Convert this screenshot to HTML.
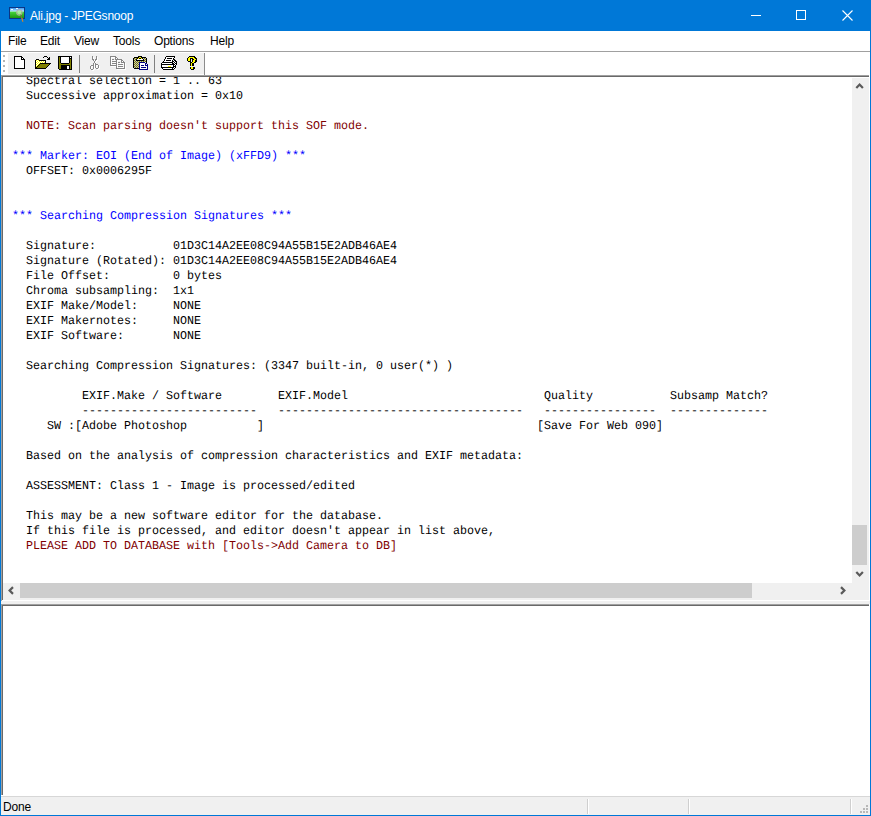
<!DOCTYPE html>
<html>
<head>
<meta charset="utf-8">
<title>Ali.jpg - JPEGsnoop</title>
<style>
html,body{margin:0;padding:0;}
body{width:871px;height:816px;overflow:hidden;background:#fff;font-family:"Liberation Sans",sans-serif;position:relative;}
#win{position:absolute;left:0;top:0;width:871px;height:816px;background:#fff;overflow:hidden;}
.abs{position:absolute;}
#title{left:0;top:0;width:871px;height:31px;background:#0078d7;}
#title .txt{left:30px;top:8px;font-size:12px;letter-spacing:-0.22px;color:#fff;white-space:nowrap;line-height:16px;}
#bl{left:0;top:31px;width:1px;height:785px;background:#0078d7;}
#br{left:870px;top:31px;width:1px;height:785px;background:#0078d7;}
#bb{left:0;top:815px;width:871px;height:1px;background:#0078d7;}
#menu{left:1px;top:31px;width:869px;height:20px;background:#fff;}
#menu span{position:absolute;top:2px;font-size:12px;letter-spacing:-0.2px;line-height:16px;color:#000;white-space:nowrap;}
#menuline{left:1px;top:51px;width:869px;height:1px;background:#a0a0a0;}
#tbarbg{left:8px;top:53px;width:196px;height:21px;background:#f0f0f0;}
#tbarend{left:204px;top:53px;width:1px;height:22px;background:#8c8c8c;}
/* upper pane sunken border */
#p1o{left:1px;top:75px;width:868px;height:526px;background:#a0a0a0;}
#p1i{left:2px;top:76px;width:867px;height:525px;background:#696969;}
#p1h{left:2px;top:600px;width:867px;height:1px;background:#fff;}
#edit{left:3px;top:77px;width:866px;height:523px;background:#fff;overflow:hidden;}
#pre{left:9px;top:-3px;margin:0;font-family:"Liberation Mono",monospace;font-size:12px;line-height:15px;color:#000;white-space:pre;text-rendering:geometricPrecision;transform:scaleX(0.972222);transform-origin:0 0;}
.r{color:#800000;}
.b{color:#0000ff;}
.d{text-shadow:0.9px 0 0 #000,-0.9px 0 0 #000;}
#vs{left:852px;top:78px;width:17px;height:505px;background:#f0f0f0;}
#vthumb{left:852px;top:525px;width:15px;height:40px;background:#cdcdcd;}
#hs{left:3px;top:583px;width:866px;height:17px;background:#f0f0f0;}
#hthumb{left:20px;top:583px;width:732px;height:15px;background:#cdcdcd;}
#splitbar{left:1px;top:601px;width:869px;height:3px;background:#f0f0f0;}
/* lower pane */
#p2o{left:1px;top:604px;width:868px;height:191px;background:#a0a0a0;}
#p2i{left:2px;top:605px;width:867px;height:190px;background:#696969;}
#p2{left:3px;top:606px;width:866px;height:190px;background:#fff;}
#statusline{left:1px;top:796px;width:869px;height:1px;background:#d7d7d7;}
#status{left:1px;top:797px;width:869px;height:18px;background:#f0f0f0;}
#status .txt{left:2px;top:2px;font-size:12px;letter-spacing:-0.2px;line-height:16px;color:#000;}
.ssep{position:absolute;top:799px;width:1px;height:15px;background:#cfcfcf;}
.ssepw{position:absolute;top:799px;width:1px;height:15px;background:#fff;}
</style>
</head>
<body>
<div id="win">
  <div id="title" class="abs">
    <!--APPICON--><svg class="abs" style="left:8px;top:5px" width="20" height="20" viewBox="8 5 20 20">
<defs><linearGradient id="sky" x1="0" y1="0" x2="0" y2="1"><stop offset="0" stop-color="#3f97ee"/><stop offset="0.55" stop-color="#8fcdfa"/><stop offset="1" stop-color="#d6f2ff"/></linearGradient>
<linearGradient id="grass" x1="0" y1="0" x2="0" y2="1"><stop offset="0" stop-color="#46d83e"/><stop offset="1" stop-color="#1c9610"/></linearGradient></defs>
<rect x="9" y="7" width="16" height="12" fill="#0a3585"/>
<rect x="10" y="8" width="14" height="4" fill="url(#sky)"/>
<rect x="10" y="11.6" width="14" height="6.4" fill="url(#grass)"/>
<rect x="11" y="9" width="2" height="1" fill="#f4faff"/><rect x="16" y="8" width="2" height="1" fill="#eef7ff"/>
<circle cx="19.3" cy="12.5" r="2.2" fill="#aeeea2" fill-opacity="0.9"/>
<circle cx="19.3" cy="12.5" r="2.8" fill="none" stroke="#b8ada6" stroke-width="1"/>
<path d="M20.9 15 L22.7 21.3" stroke="#7d6a4c" stroke-width="1" stroke-linecap="round"/>
<path d="M22 18.6 L22.8 21.3" stroke="#d08a30" stroke-width="1.1" stroke-linecap="round"/>
</svg><!--/APPICON-->
    <div class="txt abs">Ali.jpg - JPEGsnoop</div>
    <!--WINBTN--><svg class="abs" style="left:731px;top:0" width="140" height="31" viewBox="731 0 140 31" shape-rendering="crispEdges">
<rect x="751" y="15" width="10" height="1" fill="#fff"/>
<rect x="796.5" y="10.5" width="9" height="9" fill="none" stroke="#fff" stroke-width="1"/>
<g shape-rendering="geometricPrecision"><path d="M842.5 10.5 L852.5 20.5 M852.5 10.5 L842.5 20.5" stroke="#fff" stroke-width="1.1" fill="none"/></g>
</svg><!--/WINBTN-->
  </div>
  <div id="menu" class="abs">
    <span style="left:7px">File</span>
    <span style="left:39px">Edit</span>
    <span style="left:73px">View</span>
    <span style="left:112px">Tools</span>
    <span style="left:153px">Options</span>
    <span style="left:209px">Help</span>
  </div>
  <div id="menuline" class="abs"></div>
  <div id="tbarbg" class="abs"></div>
  <div id="tbarend" class="abs"></div>
  <!--ICONS--><svg id="tbicons" class="abs" style="left:0;top:0" width="871" height="80" viewBox="0 0 871 80" shape-rendering="crispEdges"><rect x="14" y="56" width="8" height="1" fill="#000000"/><rect x="14" y="57" width="1" height="1" fill="#000000"/><rect x="15" y="57" width="6" height="1" fill="#ffffff"/><rect x="21" y="57" width="2" height="1" fill="#000000"/><rect x="14" y="58" width="1" height="1" fill="#000000"/><rect x="15" y="58" width="6" height="1" fill="#ffffff"/><rect x="21" y="58" width="1" height="1" fill="#000000"/><rect x="22" y="58" width="1" height="1" fill="#ffffff"/><rect x="23" y="58" width="1" height="1" fill="#000000"/><rect x="14" y="59" width="1" height="1" fill="#000000"/><rect x="15" y="59" width="6" height="1" fill="#ffffff"/><rect x="21" y="59" width="4" height="1" fill="#000000"/><rect x="14" y="60" width="1" height="1" fill="#000000"/><rect x="15" y="60" width="9" height="1" fill="#ffffff"/><rect x="24" y="60" width="1" height="1" fill="#000000"/><rect x="14" y="61" width="1" height="1" fill="#000000"/><rect x="15" y="61" width="9" height="1" fill="#ffffff"/><rect x="24" y="61" width="1" height="1" fill="#000000"/><rect x="14" y="62" width="1" height="1" fill="#000000"/><rect x="15" y="62" width="9" height="1" fill="#ffffff"/><rect x="24" y="62" width="1" height="1" fill="#000000"/><rect x="14" y="63" width="1" height="1" fill="#000000"/><rect x="15" y="63" width="9" height="1" fill="#ffffff"/><rect x="24" y="63" width="1" height="1" fill="#000000"/><rect x="14" y="64" width="1" height="1" fill="#000000"/><rect x="15" y="64" width="9" height="1" fill="#ffffff"/><rect x="24" y="64" width="1" height="1" fill="#000000"/><rect x="14" y="65" width="1" height="1" fill="#000000"/><rect x="15" y="65" width="9" height="1" fill="#ffffff"/><rect x="24" y="65" width="1" height="1" fill="#000000"/><rect x="14" y="66" width="1" height="1" fill="#000000"/><rect x="15" y="66" width="9" height="1" fill="#ffffff"/><rect x="24" y="66" width="1" height="1" fill="#000000"/><rect x="14" y="67" width="1" height="1" fill="#000000"/><rect x="15" y="67" width="9" height="1" fill="#ffffff"/><rect x="24" y="67" width="1" height="1" fill="#000000"/><rect x="14" y="68" width="11" height="1" fill="#000000"/><rect x="44" y="56" width="3" height="1" fill="#000000"/><rect x="43" y="57" width="1" height="1" fill="#000000"/><rect x="47" y="57" width="1" height="1" fill="#000000"/><rect x="49" y="57" width="1" height="1" fill="#000000"/><rect x="48" y="58" width="2" height="1" fill="#000000"/><rect x="36" y="59" width="3" height="1" fill="#000000"/><rect x="47" y="59" width="3" height="1" fill="#000000"/><rect x="35" y="60" width="1" height="1" fill="#000000"/><rect x="36" y="60" width="1" height="1" fill="#ffff00"/><rect x="37" y="60" width="1" height="1" fill="#ffffff"/><rect x="38" y="60" width="1" height="1" fill="#ffff00"/><rect x="39" y="60" width="7" height="1" fill="#000000"/><rect x="35" y="61" width="1" height="1" fill="#000000"/><rect x="36" y="61" width="1" height="1" fill="#ffffff"/><rect x="37" y="61" width="1" height="1" fill="#ffff00"/><rect x="38" y="61" width="1" height="1" fill="#ffffff"/><rect x="39" y="61" width="1" height="1" fill="#ffff00"/><rect x="40" y="61" width="1" height="1" fill="#ffffff"/><rect x="41" y="61" width="1" height="1" fill="#ffff00"/><rect x="42" y="61" width="1" height="1" fill="#ffffff"/><rect x="43" y="61" width="1" height="1" fill="#ffff00"/><rect x="44" y="61" width="1" height="1" fill="#ffffff"/><rect x="45" y="61" width="1" height="1" fill="#000000"/><rect x="35" y="62" width="1" height="1" fill="#000000"/><rect x="36" y="62" width="1" height="1" fill="#ffff00"/><rect x="37" y="62" width="1" height="1" fill="#ffffff"/><rect x="38" y="62" width="1" height="1" fill="#ffff00"/><rect x="39" y="62" width="1" height="1" fill="#ffffff"/><rect x="40" y="62" width="1" height="1" fill="#ffff00"/><rect x="41" y="62" width="1" height="1" fill="#ffffff"/><rect x="42" y="62" width="1" height="1" fill="#ffff00"/><rect x="43" y="62" width="1" height="1" fill="#ffffff"/><rect x="44" y="62" width="1" height="1" fill="#ffff00"/><rect x="45" y="62" width="1" height="1" fill="#000000"/><rect x="35" y="63" width="1" height="1" fill="#000000"/><rect x="36" y="63" width="1" height="1" fill="#ffffff"/><rect x="37" y="63" width="1" height="1" fill="#ffff00"/><rect x="38" y="63" width="1" height="1" fill="#ffffff"/><rect x="39" y="63" width="1" height="1" fill="#ffff00"/><rect x="40" y="63" width="11" height="1" fill="#000000"/><rect x="35" y="64" width="1" height="1" fill="#000000"/><rect x="36" y="64" width="1" height="1" fill="#ffff00"/><rect x="37" y="64" width="1" height="1" fill="#ffffff"/><rect x="38" y="64" width="1" height="1" fill="#ffff00"/><rect x="39" y="64" width="1" height="1" fill="#000000"/><rect x="40" y="64" width="9" height="1" fill="#808000"/><rect x="49" y="64" width="1" height="1" fill="#000000"/><rect x="35" y="65" width="1" height="1" fill="#000000"/><rect x="36" y="65" width="1" height="1" fill="#ffffff"/><rect x="37" y="65" width="1" height="1" fill="#ffff00"/><rect x="38" y="65" width="1" height="1" fill="#000000"/><rect x="39" y="65" width="9" height="1" fill="#808000"/><rect x="48" y="65" width="1" height="1" fill="#000000"/><rect x="35" y="66" width="1" height="1" fill="#000000"/><rect x="36" y="66" width="1" height="1" fill="#ffff00"/><rect x="37" y="66" width="1" height="1" fill="#000000"/><rect x="38" y="66" width="9" height="1" fill="#808000"/><rect x="47" y="66" width="1" height="1" fill="#000000"/><rect x="35" y="67" width="2" height="1" fill="#000000"/><rect x="37" y="67" width="9" height="1" fill="#808000"/><rect x="46" y="67" width="1" height="1" fill="#000000"/><rect x="35" y="68" width="11" height="1" fill="#000000"/><rect x="58" y="56" width="14" height="1" fill="#000000"/><rect x="58" y="57" width="1" height="1" fill="#000000"/><rect x="59" y="57" width="1" height="1" fill="#808000"/><rect x="60" y="57" width="1" height="1" fill="#000000"/><rect x="61" y="57" width="8" height="1" fill="#ffffff"/><rect x="69" y="57" width="1" height="1" fill="#000000"/><rect x="70" y="57" width="1" height="1" fill="#ffffff"/><rect x="71" y="57" width="1" height="1" fill="#000000"/><rect x="58" y="58" width="1" height="1" fill="#000000"/><rect x="59" y="58" width="1" height="1" fill="#808000"/><rect x="60" y="58" width="1" height="1" fill="#000000"/><rect x="61" y="58" width="8" height="1" fill="#ffffff"/><rect x="69" y="58" width="3" height="1" fill="#000000"/><rect x="58" y="59" width="1" height="1" fill="#000000"/><rect x="59" y="59" width="1" height="1" fill="#808000"/><rect x="60" y="59" width="1" height="1" fill="#000000"/><rect x="61" y="59" width="8" height="1" fill="#ffffff"/><rect x="69" y="59" width="1" height="1" fill="#000000"/><rect x="70" y="59" width="1" height="1" fill="#808000"/><rect x="71" y="59" width="1" height="1" fill="#000000"/><rect x="58" y="60" width="1" height="1" fill="#000000"/><rect x="59" y="60" width="1" height="1" fill="#808000"/><rect x="60" y="60" width="1" height="1" fill="#000000"/><rect x="61" y="60" width="8" height="1" fill="#ffffff"/><rect x="69" y="60" width="1" height="1" fill="#000000"/><rect x="70" y="60" width="1" height="1" fill="#808000"/><rect x="71" y="60" width="1" height="1" fill="#000000"/><rect x="58" y="61" width="1" height="1" fill="#000000"/><rect x="59" y="61" width="1" height="1" fill="#808000"/><rect x="60" y="61" width="1" height="1" fill="#000000"/><rect x="61" y="61" width="8" height="1" fill="#ffffff"/><rect x="69" y="61" width="1" height="1" fill="#000000"/><rect x="70" y="61" width="1" height="1" fill="#808000"/><rect x="71" y="61" width="1" height="1" fill="#000000"/><rect x="58" y="62" width="1" height="1" fill="#000000"/><rect x="59" y="62" width="1" height="1" fill="#808000"/><rect x="60" y="62" width="1" height="1" fill="#000000"/><rect x="61" y="62" width="8" height="1" fill="#ffffff"/><rect x="69" y="62" width="1" height="1" fill="#000000"/><rect x="70" y="62" width="1" height="1" fill="#808000"/><rect x="71" y="62" width="1" height="1" fill="#000000"/><rect x="58" y="63" width="1" height="1" fill="#000000"/><rect x="59" y="63" width="2" height="1" fill="#808000"/><rect x="61" y="63" width="8" height="1" fill="#000000"/><rect x="69" y="63" width="2" height="1" fill="#808000"/><rect x="71" y="63" width="1" height="1" fill="#000000"/><rect x="58" y="64" width="1" height="1" fill="#000000"/><rect x="59" y="64" width="12" height="1" fill="#808000"/><rect x="71" y="64" width="1" height="1" fill="#000000"/><rect x="58" y="65" width="1" height="1" fill="#000000"/><rect x="59" y="65" width="2" height="1" fill="#808000"/><rect x="61" y="65" width="9" height="1" fill="#000000"/><rect x="70" y="65" width="1" height="1" fill="#808000"/><rect x="71" y="65" width="1" height="1" fill="#000000"/><rect x="58" y="66" width="1" height="1" fill="#000000"/><rect x="59" y="66" width="2" height="1" fill="#808000"/><rect x="61" y="66" width="6" height="1" fill="#000000"/><rect x="67" y="66" width="2" height="1" fill="#ffffff"/><rect x="69" y="66" width="1" height="1" fill="#000000"/><rect x="70" y="66" width="1" height="1" fill="#808000"/><rect x="71" y="66" width="1" height="1" fill="#000000"/><rect x="58" y="67" width="1" height="1" fill="#000000"/><rect x="59" y="67" width="2" height="1" fill="#808000"/><rect x="61" y="67" width="6" height="1" fill="#000000"/><rect x="67" y="67" width="2" height="1" fill="#ffffff"/><rect x="69" y="67" width="1" height="1" fill="#000000"/><rect x="70" y="67" width="1" height="1" fill="#808000"/><rect x="71" y="67" width="1" height="1" fill="#000000"/><rect x="58" y="68" width="1" height="1" fill="#000000"/><rect x="59" y="68" width="2" height="1" fill="#808000"/><rect x="61" y="68" width="6" height="1" fill="#000000"/><rect x="67" y="68" width="2" height="1" fill="#ffffff"/><rect x="69" y="68" width="1" height="1" fill="#000000"/><rect x="70" y="68" width="1" height="1" fill="#808000"/><rect x="71" y="68" width="1" height="1" fill="#000000"/><rect x="59" y="69" width="13" height="1" fill="#000000"/><rect x="93" y="57" width="1" height="1" fill="#ffffff"/><rect x="97" y="57" width="1" height="1" fill="#ffffff"/><rect x="93" y="58" width="1" height="1" fill="#ffffff"/><rect x="97" y="58" width="1" height="1" fill="#ffffff"/><rect x="93" y="59" width="1" height="1" fill="#ffffff"/><rect x="97" y="59" width="1" height="1" fill="#ffffff"/><rect x="93" y="60" width="2" height="1" fill="#ffffff"/><rect x="96" y="60" width="2" height="1" fill="#ffffff"/><rect x="94" y="61" width="1" height="1" fill="#ffffff"/><rect x="96" y="61" width="1" height="1" fill="#ffffff"/><rect x="95" y="62" width="1" height="1" fill="#ffffff"/><rect x="95" y="63" width="1" height="1" fill="#ffffff"/><rect x="94" y="64" width="1" height="1" fill="#ffffff"/><rect x="96" y="64" width="1" height="1" fill="#ffffff"/><rect x="94" y="65" width="1" height="1" fill="#ffffff"/><rect x="96" y="65" width="3" height="1" fill="#ffffff"/><rect x="92" y="66" width="3" height="1" fill="#ffffff"/><rect x="96" y="66" width="1" height="1" fill="#ffffff"/><rect x="99" y="66" width="1" height="1" fill="#ffffff"/><rect x="91" y="67" width="1" height="1" fill="#ffffff"/><rect x="94" y="67" width="1" height="1" fill="#ffffff"/><rect x="96" y="67" width="1" height="1" fill="#ffffff"/><rect x="99" y="67" width="1" height="1" fill="#ffffff"/><rect x="91" y="68" width="1" height="1" fill="#ffffff"/><rect x="94" y="68" width="1" height="1" fill="#ffffff"/><rect x="96" y="68" width="1" height="1" fill="#ffffff"/><rect x="99" y="68" width="1" height="1" fill="#ffffff"/><rect x="91" y="69" width="1" height="1" fill="#ffffff"/><rect x="94" y="69" width="1" height="1" fill="#ffffff"/><rect x="97" y="69" width="2" height="1" fill="#ffffff"/><rect x="92" y="70" width="2" height="1" fill="#ffffff"/><rect x="92" y="56" width="1" height="1" fill="#878787"/><rect x="96" y="56" width="1" height="1" fill="#878787"/><rect x="92" y="57" width="1" height="1" fill="#878787"/><rect x="96" y="57" width="1" height="1" fill="#878787"/><rect x="92" y="58" width="1" height="1" fill="#878787"/><rect x="96" y="58" width="1" height="1" fill="#878787"/><rect x="92" y="59" width="2" height="1" fill="#878787"/><rect x="95" y="59" width="2" height="1" fill="#878787"/><rect x="93" y="60" width="1" height="1" fill="#878787"/><rect x="95" y="60" width="1" height="1" fill="#878787"/><rect x="94" y="61" width="1" height="1" fill="#878787"/><rect x="94" y="62" width="1" height="1" fill="#878787"/><rect x="93" y="63" width="1" height="1" fill="#878787"/><rect x="95" y="63" width="1" height="1" fill="#878787"/><rect x="93" y="64" width="1" height="1" fill="#878787"/><rect x="95" y="64" width="3" height="1" fill="#878787"/><rect x="91" y="65" width="3" height="1" fill="#878787"/><rect x="95" y="65" width="1" height="1" fill="#878787"/><rect x="98" y="65" width="1" height="1" fill="#878787"/><rect x="90" y="66" width="1" height="1" fill="#878787"/><rect x="93" y="66" width="1" height="1" fill="#878787"/><rect x="95" y="66" width="1" height="1" fill="#878787"/><rect x="98" y="66" width="1" height="1" fill="#878787"/><rect x="90" y="67" width="1" height="1" fill="#878787"/><rect x="93" y="67" width="1" height="1" fill="#878787"/><rect x="95" y="67" width="1" height="1" fill="#878787"/><rect x="98" y="67" width="1" height="1" fill="#878787"/><rect x="90" y="68" width="1" height="1" fill="#878787"/><rect x="93" y="68" width="1" height="1" fill="#878787"/><rect x="96" y="68" width="2" height="1" fill="#878787"/><rect x="91" y="69" width="2" height="1" fill="#878787"/><rect x="111" y="57" width="6" height="1" fill="#ffffff"/><rect x="111" y="58" width="1" height="1" fill="#ffffff"/><rect x="116" y="58" width="2" height="1" fill="#ffffff"/><rect x="111" y="59" width="1" height="1" fill="#ffffff"/><rect x="116" y="59" width="1" height="1" fill="#ffffff"/><rect x="118" y="59" width="1" height="1" fill="#ffffff"/><rect x="111" y="60" width="1" height="1" fill="#ffffff"/><rect x="113" y="60" width="2" height="1" fill="#ffffff"/><rect x="116" y="60" width="7" height="1" fill="#ffffff"/><rect x="111" y="61" width="1" height="1" fill="#ffffff"/><rect x="117" y="61" width="1" height="1" fill="#ffffff"/><rect x="122" y="61" width="2" height="1" fill="#ffffff"/><rect x="111" y="62" width="1" height="1" fill="#ffffff"/><rect x="113" y="62" width="5" height="1" fill="#ffffff"/><rect x="122" y="62" width="1" height="1" fill="#ffffff"/><rect x="124" y="62" width="1" height="1" fill="#ffffff"/><rect x="111" y="63" width="1" height="1" fill="#ffffff"/><rect x="117" y="63" width="1" height="1" fill="#ffffff"/><rect x="119" y="63" width="2" height="1" fill="#ffffff"/><rect x="122" y="63" width="4" height="1" fill="#ffffff"/><rect x="111" y="64" width="1" height="1" fill="#ffffff"/><rect x="113" y="64" width="5" height="1" fill="#ffffff"/><rect x="125" y="64" width="1" height="1" fill="#ffffff"/><rect x="111" y="65" width="1" height="1" fill="#ffffff"/><rect x="117" y="65" width="1" height="1" fill="#ffffff"/><rect x="119" y="65" width="5" height="1" fill="#ffffff"/><rect x="125" y="65" width="1" height="1" fill="#ffffff"/><rect x="111" y="66" width="7" height="1" fill="#ffffff"/><rect x="125" y="66" width="1" height="1" fill="#ffffff"/><rect x="117" y="67" width="1" height="1" fill="#ffffff"/><rect x="119" y="67" width="5" height="1" fill="#ffffff"/><rect x="125" y="67" width="1" height="1" fill="#ffffff"/><rect x="117" y="68" width="1" height="1" fill="#ffffff"/><rect x="125" y="68" width="1" height="1" fill="#ffffff"/><rect x="117" y="69" width="9" height="1" fill="#ffffff"/><rect x="110" y="56" width="6" height="1" fill="#878787"/><rect x="110" y="57" width="1" height="1" fill="#878787"/><rect x="115" y="57" width="2" height="1" fill="#878787"/><rect x="110" y="58" width="1" height="1" fill="#878787"/><rect x="115" y="58" width="1" height="1" fill="#878787"/><rect x="117" y="58" width="1" height="1" fill="#878787"/><rect x="110" y="59" width="1" height="1" fill="#878787"/><rect x="112" y="59" width="2" height="1" fill="#878787"/><rect x="115" y="59" width="7" height="1" fill="#878787"/><rect x="110" y="60" width="1" height="1" fill="#878787"/><rect x="116" y="60" width="1" height="1" fill="#878787"/><rect x="121" y="60" width="2" height="1" fill="#878787"/><rect x="110" y="61" width="1" height="1" fill="#878787"/><rect x="112" y="61" width="5" height="1" fill="#878787"/><rect x="121" y="61" width="1" height="1" fill="#878787"/><rect x="123" y="61" width="1" height="1" fill="#878787"/><rect x="110" y="62" width="1" height="1" fill="#878787"/><rect x="116" y="62" width="1" height="1" fill="#878787"/><rect x="118" y="62" width="2" height="1" fill="#878787"/><rect x="121" y="62" width="4" height="1" fill="#878787"/><rect x="110" y="63" width="1" height="1" fill="#878787"/><rect x="112" y="63" width="5" height="1" fill="#878787"/><rect x="124" y="63" width="1" height="1" fill="#878787"/><rect x="110" y="64" width="1" height="1" fill="#878787"/><rect x="116" y="64" width="1" height="1" fill="#878787"/><rect x="118" y="64" width="5" height="1" fill="#878787"/><rect x="124" y="64" width="1" height="1" fill="#878787"/><rect x="110" y="65" width="7" height="1" fill="#878787"/><rect x="124" y="65" width="1" height="1" fill="#878787"/><rect x="116" y="66" width="1" height="1" fill="#878787"/><rect x="118" y="66" width="5" height="1" fill="#878787"/><rect x="124" y="66" width="1" height="1" fill="#878787"/><rect x="116" y="67" width="1" height="1" fill="#878787"/><rect x="124" y="67" width="1" height="1" fill="#878787"/><rect x="116" y="68" width="9" height="1" fill="#878787"/><rect x="138" y="56" width="4" height="1" fill="#000000"/><rect x="134" y="57" width="5" height="1" fill="#000000"/><rect x="139" y="57" width="2" height="1" fill="#ffff00"/><rect x="141" y="57" width="5" height="1" fill="#000000"/><rect x="133" y="58" width="1" height="1" fill="#000000"/><rect x="134" y="58" width="1" height="1" fill="#808000"/><rect x="135" y="58" width="1" height="1" fill="#c0c0c0"/><rect x="136" y="58" width="1" height="1" fill="#808000"/><rect x="137" y="58" width="1" height="1" fill="#000000"/><rect x="138" y="58" width="1" height="1" fill="#ffff00"/><rect x="139" y="58" width="2" height="1" fill="#000000"/><rect x="141" y="58" width="1" height="1" fill="#ffff00"/><rect x="142" y="58" width="1" height="1" fill="#000000"/><rect x="143" y="58" width="1" height="1" fill="#c0c0c0"/><rect x="144" y="58" width="1" height="1" fill="#808000"/><rect x="145" y="58" width="1" height="1" fill="#c0c0c0"/><rect x="146" y="58" width="1" height="1" fill="#000000"/><rect x="133" y="59" width="1" height="1" fill="#000000"/><rect x="134" y="59" width="1" height="1" fill="#c0c0c0"/><rect x="135" y="59" width="1" height="1" fill="#808000"/><rect x="136" y="59" width="1" height="1" fill="#000000"/><rect x="137" y="59" width="6" height="1" fill="#ffffff"/><rect x="143" y="59" width="1" height="1" fill="#000000"/><rect x="144" y="59" width="1" height="1" fill="#c0c0c0"/><rect x="145" y="59" width="1" height="1" fill="#808000"/><rect x="146" y="59" width="1" height="1" fill="#000000"/><rect x="133" y="60" width="1" height="1" fill="#000000"/><rect x="134" y="60" width="1" height="1" fill="#808000"/><rect x="135" y="60" width="1" height="1" fill="#c0c0c0"/><rect x="136" y="60" width="8" height="1" fill="#000000"/><rect x="144" y="60" width="1" height="1" fill="#808000"/><rect x="145" y="60" width="1" height="1" fill="#c0c0c0"/><rect x="146" y="60" width="1" height="1" fill="#000000"/><rect x="133" y="61" width="1" height="1" fill="#000000"/><rect x="134" y="61" width="1" height="1" fill="#c0c0c0"/><rect x="135" y="61" width="1" height="1" fill="#808000"/><rect x="136" y="61" width="1" height="1" fill="#c0c0c0"/><rect x="137" y="61" width="1" height="1" fill="#808000"/><rect x="138" y="61" width="1" height="1" fill="#c0c0c0"/><rect x="139" y="61" width="1" height="1" fill="#808000"/><rect x="140" y="61" width="1" height="1" fill="#c0c0c0"/><rect x="141" y="61" width="1" height="1" fill="#808000"/><rect x="142" y="61" width="1" height="1" fill="#c0c0c0"/><rect x="143" y="61" width="1" height="1" fill="#808000"/><rect x="144" y="61" width="1" height="1" fill="#c0c0c0"/><rect x="145" y="61" width="1" height="1" fill="#808000"/><rect x="146" y="61" width="1" height="1" fill="#000000"/><rect x="133" y="62" width="1" height="1" fill="#000000"/><rect x="134" y="62" width="1" height="1" fill="#808000"/><rect x="135" y="62" width="1" height="1" fill="#c0c0c0"/><rect x="136" y="62" width="1" height="1" fill="#808000"/><rect x="137" y="62" width="1" height="1" fill="#c0c0c0"/><rect x="138" y="62" width="1" height="1" fill="#808000"/><rect x="139" y="62" width="6" height="1" fill="#000080"/><rect x="146" y="62" width="1" height="1" fill="#000000"/><rect x="133" y="63" width="1" height="1" fill="#000000"/><rect x="134" y="63" width="1" height="1" fill="#c0c0c0"/><rect x="135" y="63" width="1" height="1" fill="#808000"/><rect x="136" y="63" width="1" height="1" fill="#c0c0c0"/><rect x="137" y="63" width="1" height="1" fill="#808000"/><rect x="138" y="63" width="1" height="1" fill="#c0c0c0"/><rect x="139" y="63" width="1" height="1" fill="#000080"/><rect x="140" y="63" width="5" height="1" fill="#ffffff"/><rect x="145" y="63" width="2" height="1" fill="#000080"/><rect x="133" y="64" width="1" height="1" fill="#000000"/><rect x="134" y="64" width="1" height="1" fill="#808000"/><rect x="135" y="64" width="1" height="1" fill="#c0c0c0"/><rect x="136" y="64" width="1" height="1" fill="#808000"/><rect x="137" y="64" width="1" height="1" fill="#c0c0c0"/><rect x="138" y="64" width="1" height="1" fill="#808000"/><rect x="139" y="64" width="1" height="1" fill="#000080"/><rect x="140" y="64" width="5" height="1" fill="#ffffff"/><rect x="145" y="64" width="1" height="1" fill="#000080"/><rect x="146" y="64" width="1" height="1" fill="#ffffff"/><rect x="147" y="64" width="1" height="1" fill="#000080"/><rect x="133" y="65" width="1" height="1" fill="#000000"/><rect x="134" y="65" width="1" height="1" fill="#c0c0c0"/><rect x="135" y="65" width="1" height="1" fill="#808000"/><rect x="136" y="65" width="1" height="1" fill="#c0c0c0"/><rect x="137" y="65" width="1" height="1" fill="#808000"/><rect x="138" y="65" width="1" height="1" fill="#c0c0c0"/><rect x="139" y="65" width="1" height="1" fill="#000080"/><rect x="140" y="65" width="1" height="1" fill="#ffffff"/><rect x="141" y="65" width="3" height="1" fill="#000080"/><rect x="144" y="65" width="1" height="1" fill="#ffffff"/><rect x="145" y="65" width="3" height="1" fill="#000080"/><rect x="133" y="66" width="1" height="1" fill="#000000"/><rect x="134" y="66" width="1" height="1" fill="#808000"/><rect x="135" y="66" width="1" height="1" fill="#c0c0c0"/><rect x="136" y="66" width="1" height="1" fill="#808000"/><rect x="137" y="66" width="1" height="1" fill="#c0c0c0"/><rect x="138" y="66" width="1" height="1" fill="#808000"/><rect x="139" y="66" width="1" height="1" fill="#000080"/><rect x="140" y="66" width="7" height="1" fill="#ffffff"/><rect x="147" y="66" width="1" height="1" fill="#000080"/><rect x="133" y="67" width="1" height="1" fill="#000000"/><rect x="134" y="67" width="1" height="1" fill="#c0c0c0"/><rect x="135" y="67" width="1" height="1" fill="#808000"/><rect x="136" y="67" width="1" height="1" fill="#c0c0c0"/><rect x="137" y="67" width="1" height="1" fill="#808000"/><rect x="138" y="67" width="1" height="1" fill="#c0c0c0"/><rect x="139" y="67" width="1" height="1" fill="#000080"/><rect x="140" y="67" width="1" height="1" fill="#ffffff"/><rect x="141" y="67" width="5" height="1" fill="#000080"/><rect x="146" y="67" width="1" height="1" fill="#ffffff"/><rect x="147" y="67" width="1" height="1" fill="#000080"/><rect x="134" y="68" width="5" height="1" fill="#000000"/><rect x="139" y="68" width="1" height="1" fill="#000080"/><rect x="140" y="68" width="7" height="1" fill="#ffffff"/><rect x="147" y="68" width="1" height="1" fill="#000080"/><rect x="139" y="69" width="9" height="1" fill="#000080"/><rect x="166" y="56" width="9" height="1" fill="#000000"/><rect x="165" y="57" width="1" height="1" fill="#000000"/><rect x="166" y="57" width="8" height="1" fill="#ffffff"/><rect x="174" y="57" width="1" height="1" fill="#000000"/><rect x="165" y="58" width="1" height="1" fill="#000000"/><rect x="166" y="58" width="1" height="1" fill="#ffffff"/><rect x="167" y="58" width="5" height="1" fill="#000000"/><rect x="172" y="58" width="1" height="1" fill="#ffffff"/><rect x="173" y="58" width="1" height="1" fill="#000000"/><rect x="164" y="59" width="1" height="1" fill="#000000"/><rect x="165" y="59" width="8" height="1" fill="#ffffff"/><rect x="173" y="59" width="2" height="1" fill="#000000"/><rect x="164" y="60" width="1" height="1" fill="#000000"/><rect x="165" y="60" width="1" height="1" fill="#ffffff"/><rect x="166" y="60" width="5" height="1" fill="#000000"/><rect x="171" y="60" width="1" height="1" fill="#ffffff"/><rect x="172" y="60" width="1" height="1" fill="#000000"/><rect x="173" y="60" width="1" height="1" fill="#ffffff"/><rect x="174" y="60" width="2" height="1" fill="#000000"/><rect x="163" y="61" width="1" height="1" fill="#000000"/><rect x="164" y="61" width="8" height="1" fill="#ffffff"/><rect x="172" y="61" width="2" height="1" fill="#000000"/><rect x="174" y="61" width="1" height="1" fill="#ffffff"/><rect x="175" y="61" width="2" height="1" fill="#000000"/><rect x="162" y="62" width="11" height="1" fill="#000000"/><rect x="173" y="62" width="1" height="1" fill="#ffffff"/><rect x="174" y="62" width="1" height="1" fill="#000000"/><rect x="175" y="62" width="1" height="1" fill="#ffffff"/><rect x="176" y="62" width="1" height="1" fill="#000000"/><rect x="161" y="63" width="1" height="1" fill="#000000"/><rect x="162" y="63" width="10" height="1" fill="#ffffff"/><rect x="172" y="63" width="2" height="1" fill="#000000"/><rect x="174" y="63" width="1" height="1" fill="#ffffff"/><rect x="175" y="63" width="2" height="1" fill="#000000"/><rect x="161" y="64" width="14" height="1" fill="#000000"/><rect x="175" y="64" width="1" height="1" fill="#ffffff"/><rect x="176" y="64" width="1" height="1" fill="#000000"/><rect x="161" y="65" width="1" height="1" fill="#000000"/><rect x="162" y="65" width="11" height="1" fill="#ffffff"/><rect x="173" y="65" width="1" height="1" fill="#000000"/><rect x="174" y="65" width="1" height="1" fill="#ffffff"/><rect x="175" y="65" width="1" height="1" fill="#000000"/><rect x="161" y="66" width="1" height="1" fill="#000000"/><rect x="162" y="66" width="6" height="1" fill="#ffffff"/><rect x="168" y="66" width="3" height="1" fill="#ffff00"/><rect x="171" y="66" width="2" height="1" fill="#ffffff"/><rect x="173" y="66" width="3" height="1" fill="#000000"/><rect x="161" y="67" width="13" height="1" fill="#000000"/><rect x="174" y="67" width="1" height="1" fill="#ffffff"/><rect x="175" y="67" width="1" height="1" fill="#000000"/><rect x="162" y="68" width="1" height="1" fill="#000000"/><rect x="163" y="68" width="9" height="1" fill="#ffffff"/><rect x="172" y="68" width="1" height="1" fill="#000000"/><rect x="173" y="68" width="1" height="1" fill="#ffffff"/><rect x="174" y="68" width="1" height="1" fill="#000000"/><rect x="163" y="69" width="11" height="1" fill="#000000"/><rect x="189" y="56" width="6" height="1" fill="#000000"/><rect x="188" y="57" width="1" height="1" fill="#000000"/><rect x="189" y="57" width="5" height="1" fill="#ffff00"/><rect x="194" y="57" width="2" height="1" fill="#000000"/><rect x="187" y="58" width="1" height="1" fill="#000000"/><rect x="188" y="58" width="2" height="1" fill="#ffff00"/><rect x="190" y="58" width="3" height="1" fill="#000000"/><rect x="193" y="58" width="2" height="1" fill="#ffff00"/><rect x="195" y="58" width="2" height="1" fill="#000000"/><rect x="187" y="59" width="1" height="1" fill="#000000"/><rect x="188" y="59" width="2" height="1" fill="#ffff00"/><rect x="190" y="59" width="1" height="1" fill="#000000"/><rect x="192" y="59" width="2" height="1" fill="#000000"/><rect x="194" y="59" width="2" height="1" fill="#ffff00"/><rect x="196" y="59" width="1" height="1" fill="#000000"/><rect x="187" y="60" width="1" height="1" fill="#000000"/><rect x="188" y="60" width="2" height="1" fill="#ffff00"/><rect x="190" y="60" width="1" height="1" fill="#000000"/><rect x="192" y="60" width="1" height="1" fill="#000000"/><rect x="193" y="60" width="2" height="1" fill="#ffff00"/><rect x="195" y="60" width="2" height="1" fill="#000000"/><rect x="188" y="61" width="3" height="1" fill="#000000"/><rect x="192" y="61" width="1" height="1" fill="#000000"/><rect x="193" y="61" width="2" height="1" fill="#ffff00"/><rect x="195" y="61" width="2" height="1" fill="#000000"/><rect x="190" y="62" width="2" height="1" fill="#000000"/><rect x="192" y="62" width="2" height="1" fill="#ffff00"/><rect x="194" y="62" width="2" height="1" fill="#000000"/><rect x="190" y="63" width="1" height="1" fill="#000000"/><rect x="191" y="63" width="1" height="1" fill="#ffff00"/><rect x="192" y="63" width="2" height="1" fill="#000000"/><rect x="190" y="64" width="1" height="1" fill="#000000"/><rect x="191" y="64" width="1" height="1" fill="#ffff00"/><rect x="192" y="64" width="2" height="1" fill="#000000"/><rect x="190" y="65" width="1" height="1" fill="#000000"/><rect x="191" y="65" width="1" height="1" fill="#ffff00"/><rect x="192" y="65" width="2" height="1" fill="#000000"/><rect x="190" y="67" width="1" height="1" fill="#000000"/><rect x="191" y="67" width="2" height="1" fill="#ffff00"/><rect x="193" y="67" width="2" height="1" fill="#000000"/><rect x="190" y="68" width="1" height="1" fill="#000000"/><rect x="191" y="68" width="2" height="1" fill="#ffff00"/><rect x="193" y="68" width="2" height="1" fill="#000000"/><rect x="191" y="69" width="3" height="1" fill="#000000"/><rect x="79" y="55" width="1" height="18" fill="#808080"/><rect x="154" y="55" width="1" height="18" fill="#808080"/><rect x="3" y="55" width="2" height="2" fill="#b4b4b4"/><rect x="3" y="60" width="2" height="2" fill="#b4b4b4"/><rect x="3" y="65" width="2" height="2" fill="#b4b4b4"/><rect x="3" y="70" width="2" height="2" fill="#b4b4b4"/></svg><!--/ICONS-->
  <div id="p1o" class="abs"></div>
  <div id="p1i" class="abs"></div>
  <div id="p1h" class="abs"></div>
  <div id="edit" class="abs">
<pre id="pre" class="abs">  Spectral selection = 1 .. 63
  Successive approximation = 0x10

<span class="r">  NOTE: Scan parsing doesn't support this SOF mode.</span>

<span class="b">*** Marker: EOI (End of Image) (xFFD9) ***</span>
  OFFSET: 0x0006295F


<span class="b">*** Searching Compression Signatures ***</span>

  Signature:           01D3C14A2EE08C94A55B15E2ADB46AE4
  Signature (Rotated): 01D3C14A2EE08C94A55B15E2ADB46AE4
  File Offset:         0 bytes
  Chroma subsampling:  1x1
  EXIF Make/Model:     NONE
  EXIF Makernotes:     NONE
  EXIF Software:       NONE

  Searching Compression Signatures: (3347 built-in, 0 user(*) )

          EXIF.Make / Software        EXIF.Model                            Quality           Subsamp Match?
          -------------------------   -----------------------------------   ----------------  --------------
     SW :[Adobe Photoshop          ]                                       [Save For Web 090]

  Based on the analysis of compression characteristics and EXIF metadata:

  ASSESSMENT: Class 1 - Image is processed/edited

  This may be a new software editor for the database.
  If this file is processed, and editor doesn't appear in list above,
<span class="r">  PLEASE ADD TO DATABASE with [Tools-&gt;Add Camera to DB]</span>
</pre>
  </div>
  <div id="vs" class="abs"></div>
  <div id="vthumb" class="abs"></div>
  <div id="hs" class="abs"></div>
  <div id="hthumb" class="abs"></div>
  <!--ARROWS--><svg class="abs" style="left:0;top:76px" width="871" height="526" viewBox="0 76 871 526">
<g fill="none" stroke="#5a5a5a" stroke-width="2.2" stroke-linejoin="miter">
<path d="M856.3 88.1 L859.6 84.6 L862.9 88.1"/>
<path d="M856.3 571.9 L859.6 575.4 L862.9 571.9"/>
<path d="M13 587.1 L9.6 590.5 L13 593.9"/>
<path d="M841 587.1 L844.4 590.5 L841 593.9"/>
</g></svg><!--/ARROWS-->
  <div id="splitbar" class="abs"></div>
  <div id="p2o" class="abs"></div>
  <div id="p2i" class="abs"></div>
  <div id="p2" class="abs"></div>
  <div id="statusline" class="abs"></div>
  <div id="status" class="abs"><div class="txt abs">Done</div></div>
  <div class="ssep" style="left:587px"></div><div class="ssepw" style="left:588px"></div>
  <div class="ssep" style="left:688px"></div><div class="ssepw" style="left:689px"></div>
  <div class="ssep" style="left:850px"></div><div class="ssepw" style="left:851px"></div>
  <!--GRIP--><svg class="abs" style="left:855px;top:800px" width="15" height="15" viewBox="855 800 15 15" shape-rendering="crispEdges"><rect x="866" y="805" width="2" height="2" fill="#b8b8b8"/><rect x="863" y="808" width="2" height="2" fill="#b8b8b8"/><rect x="866" y="808" width="2" height="2" fill="#b8b8b8"/><rect x="860" y="811" width="2" height="2" fill="#b8b8b8"/><rect x="863" y="811" width="2" height="2" fill="#b8b8b8"/><rect x="866" y="811" width="2" height="2" fill="#b8b8b8"/></svg><!--/GRIP-->
  <div id="bl" class="abs"></div>
  <div id="br" class="abs"></div>
  <div id="bb" class="abs"></div>
</div>
</body>
</html>
